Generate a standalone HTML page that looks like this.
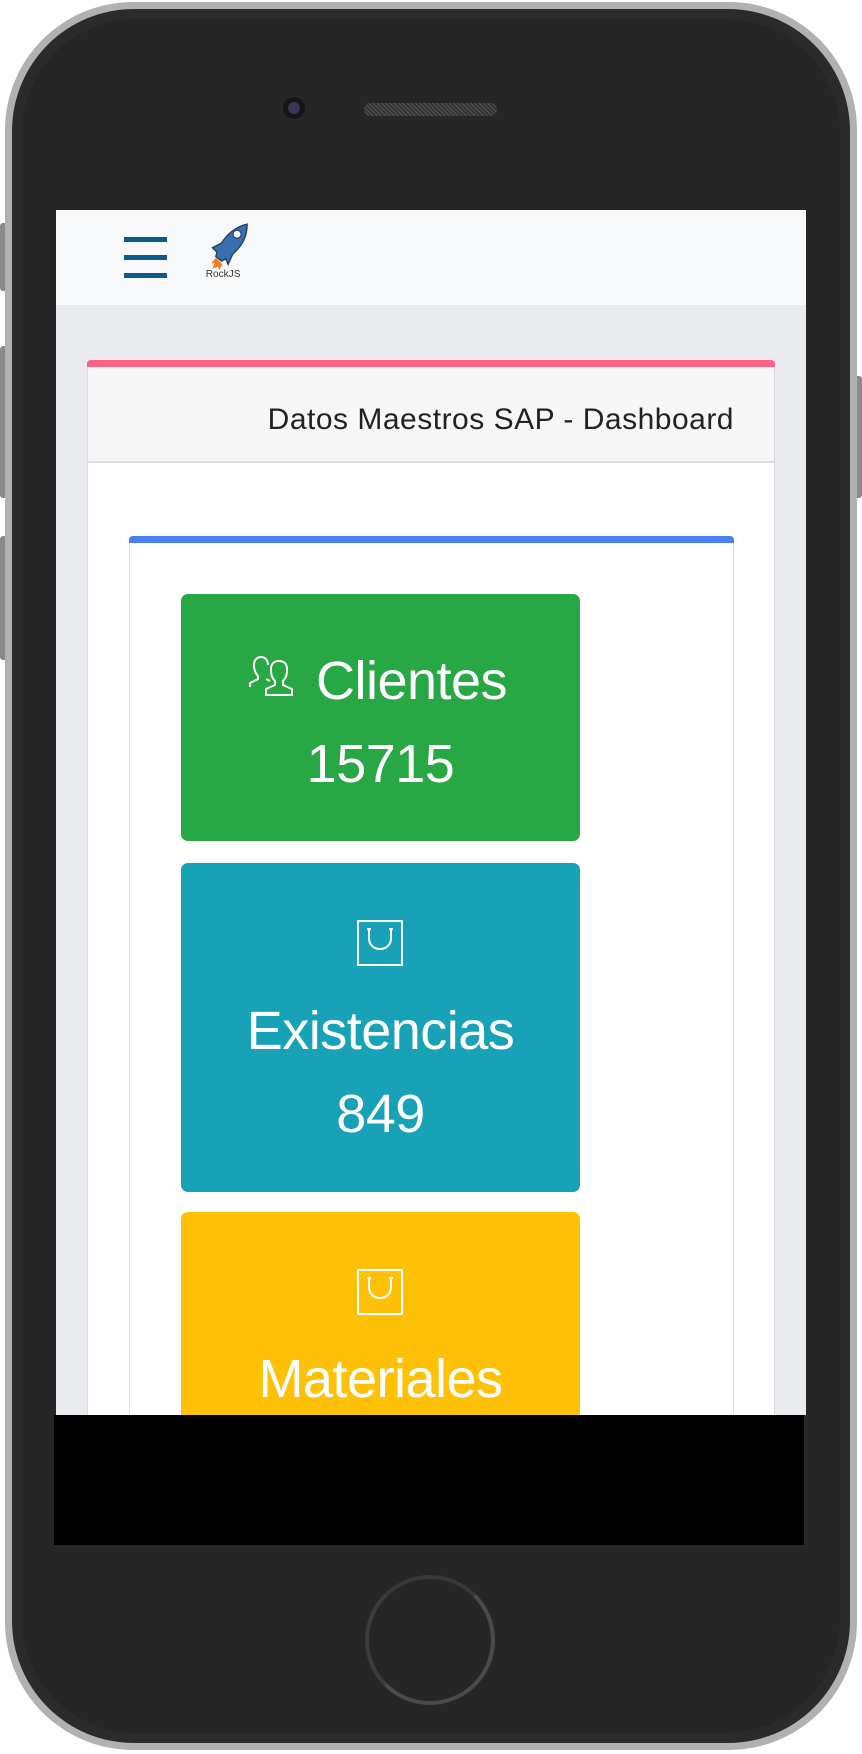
<!DOCTYPE html>
<html><head><meta charset="utf-8"><style>
*{margin:0;padding:0;box-sizing:border-box}
body{width:862px;height:1754px;background:#fff;position:relative;overflow:hidden;font-family:"Liberation Sans",sans-serif}
.abs{position:absolute}
.btn{position:absolute;background:#8a8a8a;border-radius:3px}
.txt{position:absolute;left:0;width:100%;text-align:center;color:#fff;font-size:54px;line-height:54px;letter-spacing:-0.5px;white-space:nowrap}
</style></head><body>
<div class="btn" style="left:0;top:223px;width:8px;height:68px"></div>
<div class="btn" style="left:0;top:346px;width:8px;height:152px"></div>
<div class="btn" style="left:0;top:536px;width:8px;height:124px"></div>
<div class="btn" style="left:852px;top:376px;width:10px;height:122px"></div>
<div class="abs" style="left:5px;top:2px;width:852px;height:1748px;border-radius:128px;background:#b1b1b1"></div>
<div class="abs" style="left:12px;top:9px;width:838px;height:1734px;border-radius:122px;background:#2b2b2b"></div>
<div class="abs" style="left:22px;top:19px;width:818px;height:1714px;border-radius:114px;background:#262626"></div>
<div class="abs" style="left:283px;top:97px;width:22px;height:22px;border-radius:50%;background:#151515"></div>
<div class="abs" style="left:288px;top:102px;width:12px;height:12px;border-radius:50%;background:#3a3550"></div>
<div class="abs" style="left:364px;top:103px;width:133px;height:13px;border-radius:7px;background:repeating-linear-gradient(45deg,#555 0 1px,#333 1px 3px)"></div>
<div class="abs" style="left:56px;top:210px;width:750px;height:1205px;background:#e9ebee;overflow:hidden">
  <div class="abs" style="left:0;top:0;width:750px;height:95px;background:#f8f9fa"></div>
  <div class="abs" style="left:68px;top:27px;width:43px;height:5px;background:#0b5a8f"></div>
  <div class="abs" style="left:68px;top:45px;width:43px;height:5px;background:#0b5a8f"></div>
  <div class="abs" style="left:68px;top:63px;width:43px;height:5px;background:#0b5a8f"></div>
  <svg class="abs" style="left:146px;top:13px" width="50" height="56" viewBox="0 0 44 50">
    <path d="M12 31 l-4 5 l3 0 l-2 5 l5 -2 l1 3 l3-5 z" fill="#f57c1f"/>
    <path d="M40 1 C30 3 22 10 17 18 L9 22 L13 26 L12 30 L17 34 L21 32 L23 37 L27 28 C36 20 40 12 40 1 Z" fill="#3a6fae" stroke="#1f3f66" stroke-width="1.2"/>
    <circle cx="31" cy="10" r="3.6" fill="#fff" stroke="#1f3f66" stroke-width="1"/>
    <text x="3" y="48" font-size="9" fill="#333" font-family="Liberation Sans,sans-serif">RockJS</text>
  </svg>
  <div class="abs" style="left:31px;top:150px;width:688px;height:1100px;background:#fff;border:1px solid #dcdcdc;border-top:none;border-radius:4px 4px 0 0">
    <div class="abs" style="left:-1px;top:0;width:688px;height:7px;background:#ff6384;border-radius:4px 4px 0 0"></div>
    <div class="abs" style="left:0;top:7px;width:686px;height:96px;background:#f7f7f7;border-bottom:2px solid #dedede"></div>
    <div class="abs" style="right:40px;top:42px;font-size:30px;line-height:36px;color:#222;letter-spacing:0.5px;white-space:nowrap">Datos Maestros SAP - Dashboard</div>
    <div class="abs" style="left:41px;top:176px;width:605px;height:900px;background:#fff;border:1px solid #dcdcdc;border-radius:4px 4px 0 0">
      <div class="abs" style="left:-1px;top:-1px;width:605px;height:7px;background:#4a80f5;border-radius:4px 4px 0 0"></div>
    </div>
  </div>
  <div class="abs" style="left:125px;top:384px;width:399px;height:247px;background:#28a745;border-radius:7px">
    <svg class="abs" style="left:68px;top:62px" width="52" height="40" viewBox="0 0 52 40" fill="none" stroke="#fff" stroke-width="2">
      <path d="M1 31 L1 27 L9 23 L9 20 C6 17 5 14 5 9 C5 4 8 1 12 1 C16 1 19 4 19 9 M17 23 L21 25"/>
      <path d="M17 39 L17 33 L26 29 L26 25 C23 22 22 19 22 13 C22 8 25 5 30 5 C35 5 38 8 38 13 C38 19 37 22 34 25 L34 29 L43 33 L43 39 Z"/>
    </svg>
  </div>
  <div class="txt" style="left:156px;width:399px;top:444px">Clientes</div>
  <div class="txt" style="left:125px;width:399px;top:527px">15715</div>
  <div class="abs" style="left:125px;top:653px;width:399px;height:329px;background:#17a2b8;border-radius:7px"></div>
  <svg class="abs" style="left:301px;top:710px" width="46" height="46" viewBox="0 0 46 46" fill="none" stroke="#fff" stroke-width="2">
    <rect x="1" y="1" width="44" height="44"/><path d="M12 9 L12 18 C12 25 17 29 23 29 C29 29 34 25 34 18 L34 9 M10 9 L14 9 M32 9 L36 9"/>
  </svg>
  <div class="txt" style="left:125px;width:399px;top:794px">Existencias</div>
  <div class="txt" style="left:125px;width:399px;top:877px">849</div>
  <div class="abs" style="left:125px;top:1002px;width:399px;height:300px;background:#ffc107;border-radius:7px"></div>
  <svg class="abs" style="left:301px;top:1059px" width="46" height="46" viewBox="0 0 46 46" fill="none" stroke="#fff" stroke-width="2">
    <rect x="1" y="1" width="44" height="44"/><path d="M12 9 L12 18 C12 25 17 29 23 29 C29 29 34 25 34 18 L34 9 M10 9 L14 9 M32 9 L36 9"/>
  </svg>
  <div class="txt" style="left:125px;width:399px;top:1142px">Materiales</div>
</div>
<div class="abs" style="left:54px;top:1415px;width:750px;height:130px;background:#000"></div>
<div class="abs" style="left:365px;top:1575px;width:130px;height:130px;border-radius:50%;border:4px solid #4a4a4a;border-top-color:#383838;border-left-color:#3c3c3c"></div>
</body></html>
